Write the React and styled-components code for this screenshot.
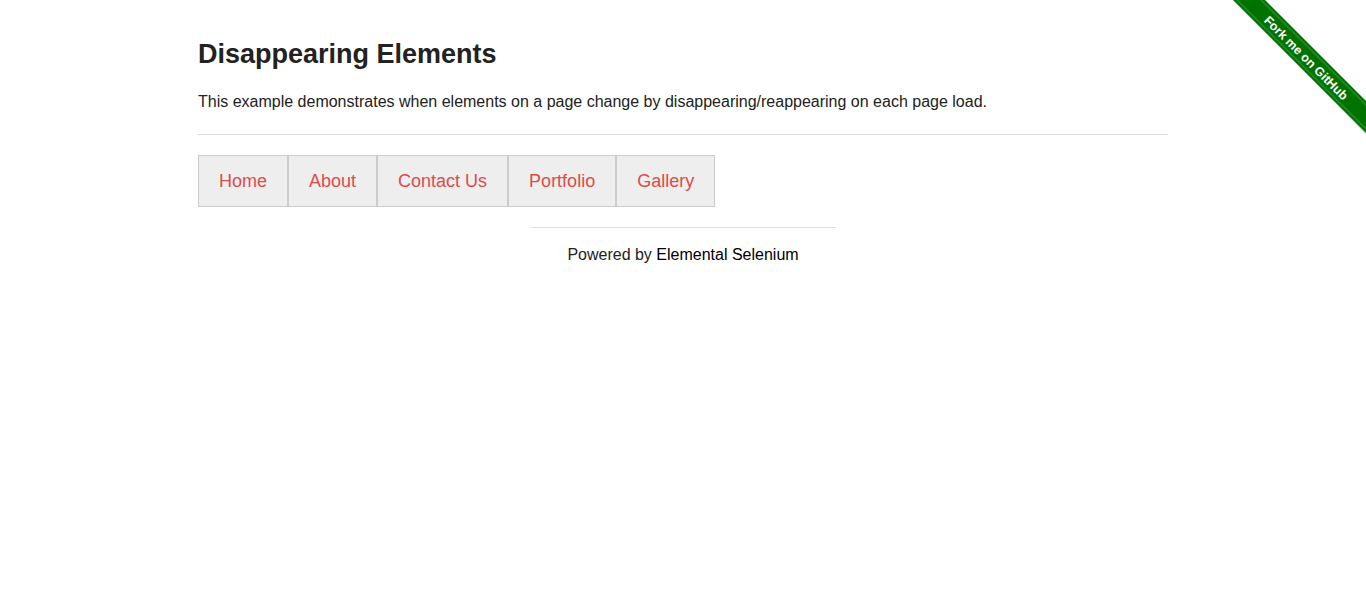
import styled, { createGlobalStyle } from "styled-components";

const GlobalStyle = createGlobalStyle`
  body {
    margin: 0;
    background: #fff;
    font-family: "Liberation Sans", Arial, sans-serif;
    color: #222;
  }
`;

const Page = styled.div`
  position: relative;
  min-height: 589px;
`;

const Container = styled.div`
  width: 970px;
  margin: 0 auto;
  padding-top: 37px;
`;

const Title = styled.h3`
  margin: 0;
  font-size: 27px;
  line-height: 34px;
  font-weight: bold;
  color: #222;
`;

const Intro = styled.p`
  margin: 18px 0 0;
  font-size: 16px;
  line-height: 25.6px;
`;

const Rule = styled.hr`
  margin: 19px 0 0;
  border: 0;
  border-top: 1px solid #ddd;
  height: 0;
`;

const Menu = styled.ul`
  display: flex;
  list-style: none;
  margin: 20px 0 0;
  padding: 0;
`;

const MenuItem = styled.li`
  border: 1px solid #ccc;
  background: #eee;
  height: 49px;
  padding: 1px 20px 0;
  display: flex;
  align-items: center;

  a {
    color: #de4b4b;
    font-size: 18px;
    text-decoration: none;
  }
`;

const Footer = styled.div`
  width: 305px;
  margin: 20px auto 0;
  border-top: 1px solid #ddd;
  padding-top: 14px;
  text-align: center;
  font-size: 16px;
  line-height: 25.6px;

  a {
    color: #000;
    text-decoration: none;
  }
`;

const Ribbon = styled.svg`
  position: absolute;
  top: 0;
  right: 0;
  width: 149px;
  height: 149px;
`;

const items = ["Home", "About", "Contact Us", "Portfolio", "Gallery"];

const ForkRibbon = () => (
  <Ribbon viewBox="0 0 149 149">
    <polygon points="18,0 21,0 149,128 149,135" fill="#000" opacity="0.12" />
    <polygon points="16,0 48,0 149,101 149,133" fill="#007200" />
    <polygon points="19,0 21,0 149,128 149,130" fill="#4aa34a" opacity="0.55" />
    <polygon points="43,0 45,0 149,104 149,106" fill="#4aa34a" opacity="0.55" />
    <text
      x="0"
      y="0"
      fill="#fff"
      fontFamily='"Liberation Sans", Arial, sans-serif'
      fontWeight="bold"
      fontSize="12.5"
      textAnchor="middle"
      transform="translate(86 61) rotate(45)"
    >
      Fork me on GitHub
    </text>
  </Ribbon>
);

export default function App() {
  return (
    <Page>
      <GlobalStyle />
      <ForkRibbon />
      <Container>
        <Title>Disappearing Elements</Title>
        <Intro>
          This example demonstrates when elements on a page change by
          disappearing/reappearing on each page load.
        </Intro>
        <Rule />
        <Menu>
          {items.map((label) => (
            <MenuItem key={label}>
              <a href="#">{label}</a>
            </MenuItem>
          ))}
        </Menu>
      </Container>
      <Footer>
        Powered by <a href="#">Elemental Selenium</a>
      </Footer>
    </Page>
  );
}
